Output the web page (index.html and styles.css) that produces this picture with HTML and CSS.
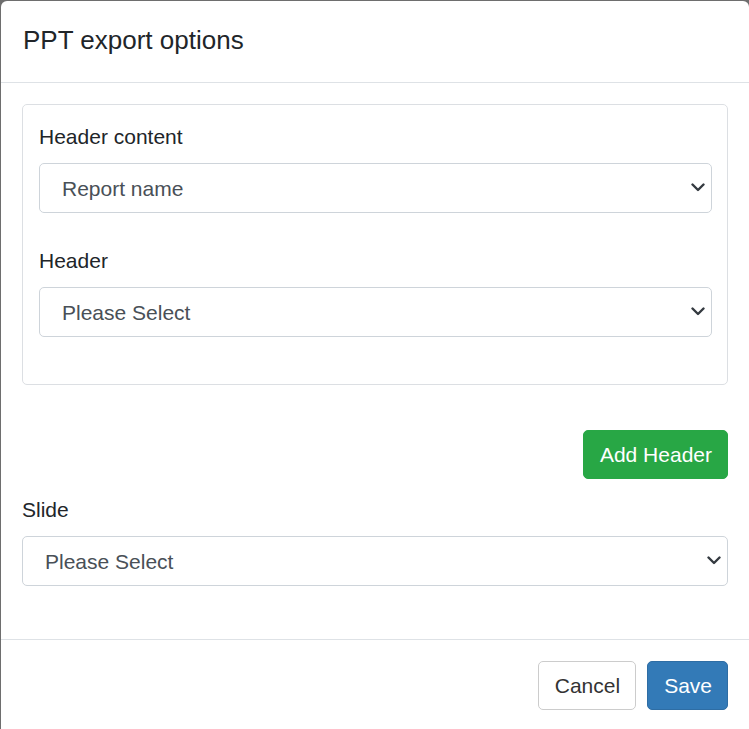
FILE: index.html
```html
<!DOCTYPE html>
<html>
<head>
<meta charset="utf-8">
<link rel="stylesheet" href="styles.css">
</head>
<body>
<div class="modal">
  <div class="modal-header">
    <h5 class="modal-title">PPT export options</h5>
  </div>
  <div class="modal-body">
    <div class="card">
      <div class="form-group">
        <label class="label">Header content</label>
        <div class="select-wrap">
          <select class="select"><option>Report name</option></select>
          <svg class="chev" width="14" height="9" viewBox="0 0 14 9"><path d="M1.5 1.5 L7 7 L12.5 1.5" fill="none" stroke="#343a40" stroke-width="2.4" stroke-linecap="round" stroke-linejoin="round"/></svg>
        </div>
      </div>
      <div class="form-group">
        <label class="label">Header</label>
        <div class="select-wrap">
          <select class="select"><option>Please Select</option></select>
          <svg class="chev" width="14" height="9" viewBox="0 0 14 9"><path d="M1.5 1.5 L7 7 L12.5 1.5" fill="none" stroke="#343a40" stroke-width="2.4" stroke-linecap="round" stroke-linejoin="round"/></svg>
        </div>
      </div>
    </div>
    <div class="actions">
      <button class="btn btn-success">Add Header</button>
    </div>
    <div class="form-group">
      <label class="label">Slide</label>
      <div class="select-wrap">
        <select class="select"><option>Please Select</option></select>
        <svg class="chev" width="14" height="9" viewBox="0 0 14 9"><path d="M1.5 1.5 L7 7 L12.5 1.5" fill="none" stroke="#343a40" stroke-width="2.4" stroke-linecap="round" stroke-linejoin="round"/></svg>
      </div>
    </div>
  </div>
  <div class="modal-footer">
    <button class="btn btn-default">Cancel</button>
    <button class="btn btn-primary">Save</button>
  </div>
</div>
</body>
</html>
```

FILE: styles.css
```css
* { box-sizing: border-box; }
html, body { margin: 0; padding: 0; }
body {
  background: #6e6e6e;
  font-family: "Liberation Sans", Arial, sans-serif;
  color: #212529;
  height: 729px;
  overflow: hidden;
}
.modal {
  margin: 1px 0 0 1px;
  width: 748px;
  height: 740px;
  background: #fff;
  border-radius: 6px;
  overflow: hidden;
}
.modal-header {
  height: 82px;
  padding: 20px 22px 0 22px;
  border-bottom: 1px solid #dee2e6;
}
.modal-title {
  margin: 0;
  font-size: 26px;
  font-weight: 400;
  line-height: 39px;
  color: #212529;
}
.modal-body {
  padding: 21px 21px 21px 21px;
}
.card {
  border: 1px solid #dcdfe3;
  border-radius: 5px;
  padding: 16px 15px 0 16px;
  height: 281px;
}
.form-group {
  margin-bottom: 32px;
}
.label {
  display: block;
  font-size: 21px;
  line-height: 31px;
  margin-bottom: 11px;
  color: #212529;
}
.select-wrap {
  position: relative;
}
.select {
  display: block;
  width: 100%;
  height: 50px;
  -webkit-appearance: none;
  appearance: none;
  border: 1px solid #ced4da;
  border-radius: 5px;
  background: #fff;
  font-family: "Liberation Sans", Arial, sans-serif;
  font-size: 21px;
  color: #495057;
  padding: 0 40px 0 22px;
  outline: none;
}
.chev {
  position: absolute;
  right: 7px;
  top: 20px;
  pointer-events: none;
}
.actions {
  display: flex;
  justify-content: flex-end;
  margin-top: 45px;
  margin-bottom: 15px;
}
.btn {
  font-family: "Liberation Sans", Arial, sans-serif;
  font-size: 21px;
  line-height: 31px;
  height: 49px;
  padding: 8px 15px 8px 16px;
  border: 1px solid transparent;
  border-radius: 5px;
  cursor: pointer;
}
.btn-success {
  background: #28a745;
  border-color: #28a745;
  color: #fff;
}
.btn-default {
  background: #fff;
  border-color: #ccc;
  color: #333;
}
.btn-primary {
  background: #337ab7;
  border-color: #2e6da4;
  color: #fff;
}
.modal-footer {
  border-top: 1px solid #dee2e6;
  padding: 21px 21px 20px 20px;
  display: flex;
  justify-content: flex-end;
  gap: 11px;
}
```
